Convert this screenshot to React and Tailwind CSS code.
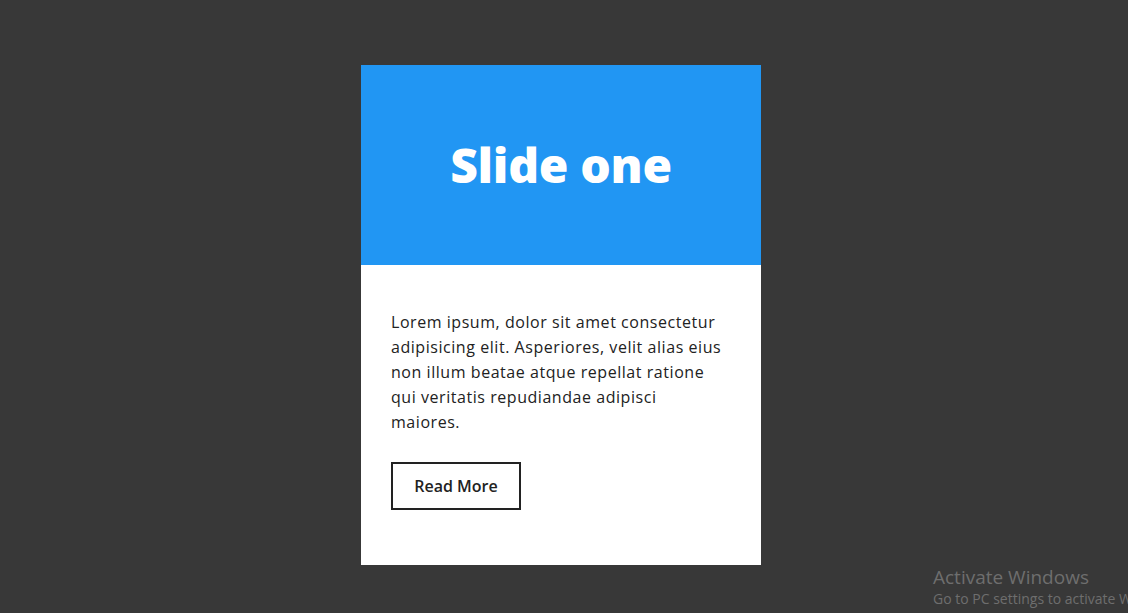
export default function App() {
  return (
    <div className="relative min-h-[613px] w-full bg-[#383838] overflow-hidden" style={{ fontFamily: '"Open Sans", "Noto Sans", sans-serif' }}>
      <div className="flex justify-center pt-[65px] pr-[6px]">
        <div className="w-[400px] h-[500px] bg-white flex flex-col">
          {/* Header */}
          <div className="h-[200px] bg-[#2196f3] flex items-center justify-center">
            <h1 className="text-[48px] font-extrabold text-white tracking-[-0.3px] leading-none">Slide one</h1>
          </div>

          {/* Body */}
          <div className="px-[30px] pt-[45px]">
            <p className="w-[335px] text-[16px] leading-[25px] text-[#222] tracking-[0.55px]">
              Lorem ipsum, dolor sit amet consectetur adipisicing elit. Asperiores, velit alias eius non illum beatae atque repellat ratione qui veritatis repudiandae adipisci maiores.
            </p>
            <button className="mt-[27px] w-[130px] h-[48px] border-2 border-[#222] text-[16px] font-semibold text-[#222]">
              Read More
            </button>
          </div>
        </div>
      </div>

      {/* Windows watermark */}
      <div className="absolute left-[933px] top-[565px] text-[#6e6e6e] whitespace-nowrap" style={{ fontFamily: '"Open Sans", sans-serif' }}>
        <div className="text-[19px] leading-[24px]">Activate Windows</div>
        <div className="text-[14px] leading-[18px] mt-[1px]">Go to PC settings to activate Windows.</div>
      </div>
    </div>
  )
}
